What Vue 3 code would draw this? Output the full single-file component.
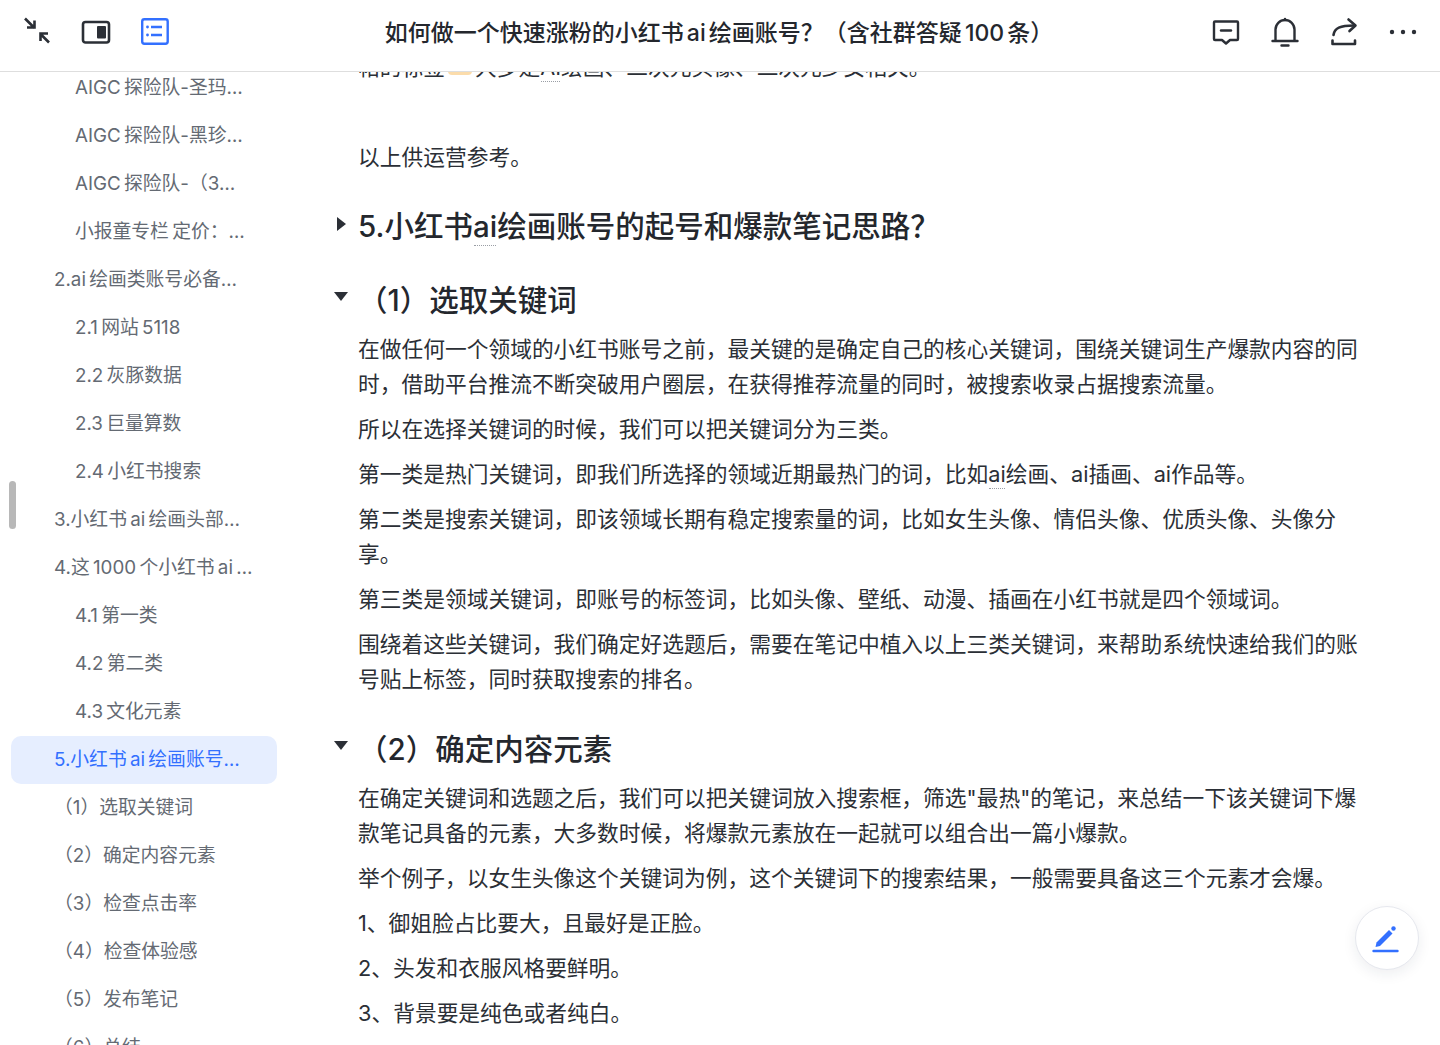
<script setup>
const toc = [
  { t: 'AIGC 探险队-圣玛…', l: 2 },
  { t: 'AIGC 探险队-黑珍…', l: 2 },
  { t: 'AIGC 探险队-（3…', l: 2 },
  { t: '小报童专栏 定价：…', l: 2 },
  { t: '2.ai 绘画类账号必备…', l: 1 },
  { t: '2.1 网站 5118', l: 2 },
  { t: '2.2 灰豚数据', l: 2 },
  { t: '2.3 巨量算数', l: 2 },
  { t: '2.4 小红书搜索', l: 2 },
  { t: '3.小红书 ai 绘画头部…', l: 1 },
  { t: '4.这 1000 个小红书 ai …', l: 1 },
  { t: '4.1 第一类', l: 2 },
  { t: '4.2 第二类', l: 2 },
  { t: '4.3 文化元素', l: 2 },
  { t: '5.小红书 ai 绘画账号…', l: 1, active: true },
  { t: '（1）选取关键词', l: 1 },
  { t: '（2）确定内容元素', l: 1 },
  { t: '（3）检查点击率', l: 1 },
  { t: '（4）检查体验感', l: 1 },
  { t: '（5）发布笔记', l: 1 },
  { t: '（6）总结', l: 1 }
]
</script>

<template>
  <div class="page">
    <header class="bar">
      <div class="tools">
        <svg class="ico" viewBox="0 0 32 32" fill="none" stroke="#2b2f36" stroke-width="2.6">
          <path d="M4 2.500 13.500 12M6 11.500h7.500V4.500" />
          <path d="M28 26.500 19 17.500M19.500 25V17.500H27" />
        </svg>
        <svg class="ico" viewBox="0 0 32 32" fill="none">
          <rect x="3" y="6" width="26" height="20.500" rx="2.500" stroke="#2b2f36" stroke-width="2.600" />
          <rect x="17" y="10" width="9" height="12.500" rx="1" fill="#2b2f36" />
        </svg>
        <svg class="ico" viewBox="0 0 32 32" fill="none" stroke="#3370ff">
          <rect x="3.200" y="3.200" width="25.500" height="24.500" rx="2.200" stroke-width="2.400" />
          <path d="M12 11h11M12 19h11" stroke-width="2.400" />
          <circle cx="8.500" cy="11" r="1.400" fill="#3370ff" stroke="none" />
          <circle cx="8.500" cy="19" r="1.400" fill="#3370ff" stroke="none" />
        </svg>
      </div>
      <div class="title">如何做一个快速涨粉的小红书 ai 绘画账号？（含社群答疑 100 条）</div>
      <div class="tools">
        <svg class="ico" viewBox="0 0 32 32" fill="none" stroke="#2b2f36" stroke-width="2.400" stroke-linejoin="round">
          <path d="M5 5.500h22a1 1 0 0 1 1 1V23a1 1 0 0 1-1 1h-7l-4 3.500-4-3.500H5a1 1 0 0 1-1-1V6.500a1 1 0 0 1 1-1Z" />
          <path d="M11 14.500h10" stroke-linecap="round" />
        </svg>
        <svg class="ico" viewBox="0 0 32 32" fill="none" stroke="#2b2f36" stroke-width="2.400" stroke-linecap="round">
          <path d="M6.500 24.500V13.500a9.500 9.500 0 0 1 19 0v11" />
          <path d="M3.500 25h25M12.500 29.500h7M16 3v1" />
        </svg>
        <svg class="ico" viewBox="0 0 32 32" fill="none" stroke="#2b2f36" stroke-width="2.600" stroke-linecap="round" stroke-linejoin="round">
          <path d="M5.500 19C6.500 12 12 9.500 26 9.500" />
          <path d="M20.500 3.500 27.500 9.500 21.500 15" />
          <path d="M4.500 24.500V28h22.500v-3.500" />
        </svg>
        <svg class="ico" viewBox="0 0 32 32" fill="#2b2f36">
          <circle cx="5" cy="16" r="2.200" />
          <circle cx="16" cy="16" r="2.200" />
          <circle cx="27" cy="16" r="2.200" />
        </svg>
      </div>
    </header>

    <div class="main">
      <nav class="side">
        <div class="thumb"></div>
        <div class="list">
          <div
            v-for="item in toc"
            :key="item.t"
            class="row"
            :class="['lv' + item.l, { on: item.active }]"
          >{{ item.t }}</div>
        </div>
      </nav>

      <article class="doc">
        <p class="clip">帖的标签<span class="mark"></span>大多是<span class="tip">AI</span>绘画、二次元头像、二次元少女相关。</p>
        <p class="blank"></p>
        <p>以上供运营参考。</p>

        <h1><i class="tri right"></i>5.小红书<span class="tip">ai</span>绘画账号的起号和爆款笔记思路？</h1>

        <h2><i class="tri down"></i>（1）选取关键词</h2>
        <p>在做任何一个领域的小红书账号之前，最关键的是确定自己的核心关键词，围绕关键词生产爆款内容的同时，借助平台推流不断突破用户圈层，在获得推荐流量的同时，被搜索收录占据搜索流量。</p>
        <p>所以在选择关键词的时候，我们可以把关键词分为三类。</p>
        <p>第一类是热门关键词，即我们所选择的领域近期最热门的词，比如<span class="tip">ai</span>绘画、ai插画、ai作品等。</p>
        <p>第二类是搜索关键词，即该领域长期有稳定搜索量的词，比如女生头像、情侣头像、优质头像、头像分享。</p>
        <p>第三类是领域关键词，即账号的标签词，比如头像、壁纸、动漫、插画在小红书就是四个领域词。</p>
        <p>围绕着这些关键词，我们确定好选题后，需要在笔记中植入以上三类关键词，来帮助系统快速给我们的账号贴上标签，同时获取搜索的排名。</p>

        <h2><i class="tri down"></i>（2）确定内容元素</h2>
        <p>在确定关键词和选题之后，我们可以把关键词放入搜索框，筛选"最热"的笔记，来总结一下该关键词下爆款笔记具备的元素，大多数时候，将爆款元素放在一起就可以组合出一篇小爆款。</p>
        <p>举个例子，以女生头像这个关键词为例，这个关键词下的搜索结果，一般需要具备这三个元素才会爆。</p>
        <p>1、御姐脸占比要大，且最好是正脸。</p>
        <p>2、头发和衣服风格要鲜明。</p>
        <p>3、背景要是纯色或者纯白。</p>
      </article>
    </div>

    <button class="fab" type="button" aria-label="编辑">
      <svg viewBox="0 0 32 32" width="32" height="32">
        <path d="M5.500 20.500 18 8l3.500 3.500L9 24l-4.500 1Z" fill="#3370ff" />
        <circle cx="22.500" cy="6.500" r="2.200" fill="#3370ff" />
        <path d="M2.500 29h24" stroke="#3370ff" stroke-width="2.400" stroke-linecap="round" />
      </svg>
    </button>
  </div>
</template>

<style>
html, body { margin: 0; background: #fff; }
</style>

<style scoped>
.page {
  position: relative;
  height: 1045px;
  overflow: hidden;
  display: flex;
  flex-direction: column;
  background: #fff;
  font-family: Inter, "Noto Sans CJK SC", sans-serif;
  color: #2b2f36;
}
.bar {
  flex: none;
  height: 72px;
  box-sizing: border-box;
  border-bottom: 1px solid #dedede;
  display: flex;
  align-items: center;
  padding: 0 21px 8px;
  position: relative;
  z-index: 2;
  background: #fff;
}
.tools { display: flex; gap: 27px; flex: none; }
.ico { width: 32px; height: 32px; display: block; }
.title {
  flex: 1;
  padding-left: 57px;
  margin-bottom: 2px;
  text-align: center;
  font-size: 23px;
  font-weight: 500;
  color: #24272d;
  white-space: nowrap;
  word-spacing: -3px;
}
.main { flex: 1; display: flex; min-height: 0; overflow: hidden; }
.side {
  position: relative;
  flex: none;
  width: 358px;
  box-sizing: border-box;
  padding: 0 0 0 11px;
}
.thumb {
  position: absolute;
  left: 9px;
  top: 409px;
  width: 7px;
  height: 48px;
  border-radius: 4px;
  background: #b8b8b8;
}
.list { width: 266px; margin-top: -8px; }
.row {
  height: 48px;
  line-height: 47px;
  font-size: 18.800px;
  color: #646a73;
  white-space: nowrap;
  word-spacing: -2px;
  border-radius: 10px;
}
.lv1 { padding-left: 43px; }
.lv2 { padding-left: 64px; }
.row.on { background: #e6eeff; color: #3370ff; }
.doc { flex: none; width: 1002px; margin-top: -32.500px; }
p {
  margin: 10px 0;
  font-size: 21.740px;
  line-height: 35px;
  color: #2b2f36;
}
.blank { height: 35px; }
.mark {
  display: inline-block;
  width: 24px;
  height: 20px;
  margin: 0 3px;
  vertical-align: 0;
  border-radius: 4px;
  background: #fbdcab;
}
.tip { position: relative; }
.tip::after {
  content: "";
  position: absolute;
  left: 1px;
  right: 1px;
  bottom: -2px;
  border-bottom: 1px dotted #9a9ea5;
}
h1, h2 {
  position: relative;
  font-size: 29.500px;
  line-height: 40px;
  font-weight: 500;
  color: #24272d;
}
h1 { margin: 31.500px 0 34px; }
h2 { margin: 32.500px 0 11.500px; }
.tri { position: absolute; width: 0; height: 0; }
.tri.right {
  left: -21px;
  top: 11px;
  border-left: 9px solid #2b2f36;
  border-top: 7.500px solid transparent;
  border-bottom: 7.500px solid transparent;
}
.tri.down {
  left: -24px;
  top: 12px;
  border-top: 9px solid #2b2f36;
  border-left: 7.500px solid transparent;
  border-right: 7.500px solid transparent;
}
.fab {
  position: absolute;
  left: 1355px;
  top: 906px;
  width: 64px;
  height: 64px;
  padding: 0;
  box-sizing: border-box;
  border: 1px solid #e6e8ee;
  border-radius: 50%;
  background: #fff;
  box-shadow: 0 4px 14px rgba(30, 40, 70, .08);
  display: flex;
  align-items: center;
  justify-content: center;
}
</style>
